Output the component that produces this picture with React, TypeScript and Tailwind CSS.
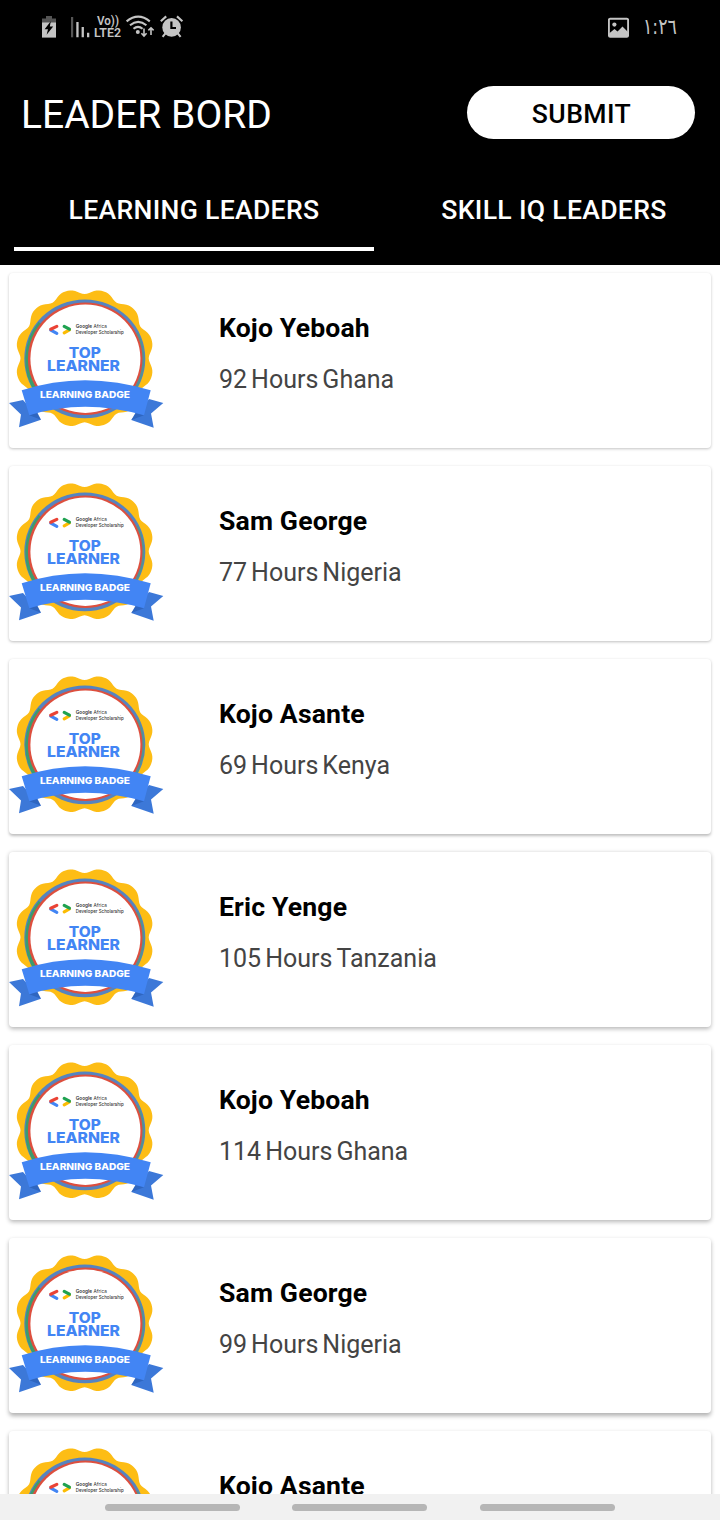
const people = [
  { name: 'Kojo Yeboah', detail: ['92', 'Hours', 'Ghana'] },
  { name: 'Sam George', detail: ['77', 'Hours', 'Nigeria'] },
  { name: 'Kojo Asante', detail: ['69', 'Hours', 'Kenya'] },
  { name: 'Eric Yenge', detail: ['105', 'Hours', 'Tanzania'] },
  { name: 'Kojo Yeboah', detail: ['114', 'Hours', 'Ghana'] },
  { name: 'Sam George', detail: ['99', 'Hours', 'Nigeria'] },
  { name: 'Kojo Asante', detail: ['69', 'Hours', 'Kenya'] },
];

// Shadows deepen slightly the lower a card sits on the screen.
const shadows = [
  'shadow-[0_1px_3px_rgba(0,0,0,0.24)]',
  'shadow-[0_1px_3px_rgba(0,0,0,0.26)]',
  'shadow-[0_1.5px_3px_rgba(0,0,0,0.26)]',
  'shadow-[0_1.5px_4px_rgba(0,0,0,0.28)]',
  'shadow-[0_2px_4px_rgba(0,0,0,0.28)]',
  'shadow-[0_2.5px_4px_rgba(0,0,0,0.3)]',
  'shadow-[0_2.5px_4px_rgba(0,0,0,0.3)]',
];

const scallop = (() => {
  const points: string[] = [];
  for (let i = 0; i < 360; i += 2) {
    const a = (i * Math.PI) / 180;
    const r = 67.2 - 2.7 * Math.cos(12 * a) - 0.4 * Math.cos(24 * a);
    points.push(`${(75.6 + r * Math.sin(a)).toFixed(2)},${(85.2 - r * Math.cos(a)).toFixed(2)}`);
  }
  return points.join(' ');
})();

function Badge() {
  return (
    <svg width="156" height="175" viewBox="0 0 156 175" className="shrink-0 font-['Inter',sans-serif]">
      <polygon points={scallop} fill="#fdbd15" />
      <ellipse cx="75.8" cy="85.8" rx="60.5" ry="59.4" fill="#5584c0" />
      <path d="M31 50A57.5 57.5 0 0 0 28 119" fill="none" stroke="#3c9c6c" strokeWidth="3.4" />
      <path d="M128 60A58.6 58.6 0 0 1 125 118" fill="none" stroke="#53938f" strokeWidth="2" />
      <ellipse cx="76.2" cy="85.8" rx="57.3" ry="56.3" fill="#dd4f3e" />
      <ellipse cx="76.4" cy="85.8" rx="55" ry="54.2" fill="#fff" />
      <g fill="none" strokeWidth="3.2" strokeLinecap="round">
        <path d="M41.8 57.2L47.8 60.3" stroke="#4285f4" />
        <path d="M41.8 56.2L47.8 53.4" stroke="#ea4335" />
        <path d="M55.2 59.8L60.4 56.8" stroke="#fbbc04" />
        <path d="M55.2 53.4L60.4 56.2" stroke="#1fa251" />
      </g>
      <g fill="#333">
        <text x="66.8" y="55.2" fontSize="5" textLength="31" lengthAdjust="spacingAndGlyphs">
          <tspan fontWeight="600">Google</tspan> Africa
        </text>
        <text x="66.8" y="61" fontSize="5" fontWeight="500" textLength="48" lengthAdjust="spacingAndGlyphs">
          Developer Scholarship
        </text>
      </g>
      <g fontWeight="800" fill="#4285f4" fontSize="14.2">
        <text x="59.8" y="85.4" textLength="32" lengthAdjust="spacingAndGlyphs">TOP</text>
        <text x="38" y="98.4" textLength="73" lengthAdjust="spacingAndGlyphs">LEARNER</text>
      </g>
      <path d="M0 130L14 127L32 146.7L10 154.3L12 141.5Z" fill="#3c78d8" />
      <path d="M154.3 130L140 126L122.3 147L144.7 154.8L142 140.5Z" fill="#3c78d8" />
      <path d="M20.3 142.3L28 139L32 146.7ZM135 142.3L127 139L122.3 147Z" fill="#2f66c0" />
      <path d="M12.7 117.3Q75 97 141.7 117.3L135 142.3Q75 125 20.3 142.3Z" fill="#4285f4" />
      <text x="31" y="125.4" fontSize="9.3" fontWeight="800" fill="#fff" textLength="90" lengthAdjust="spacingAndGlyphs">
        LEARNING BADGE
      </text>
    </svg>
  );
}

function StatusBar() {
  return (
    <div className="flex h-[54px] shrink-0 items-start justify-between pr-[42px] pl-10 text-[#c4c4c4]">
      <svg width="146" height="54" viewBox="40 0 146 54" fill="currentColor" className="font-['Roboto',sans-serif]">
        <path d="M46 16h6v2.6h4V23H42v-4.4h4z" fill="#555" />
        <path d="M42 22.5h14V37.6H42z" />
        <path d="M50.8 21.2L44.6 29.2H48L46.6 34.8L53.2 26.6H49.8Z" fill="#000" />
        <path d="M71 17h2.2v20.3H71z" fill="#555" />
        <path d="M76.3 22h2.3v15.3h-2.3zM81.6 27h2.3v10.3h-2.3zM87 32.8h2.3v4.5H87z" />
        <text x="97" y="25" fontSize="12" fontWeight="600" textLength="22" lengthAdjust="spacingAndGlyphs">Vo))</text>
        <text x="94" y="37" fontSize="12.8" fontWeight="600" textLength="27" lengthAdjust="spacingAndGlyphs">LTE2</text>
        <g fill="none" stroke="currentColor" strokeWidth="2.1">
          <path d="M126.6 21.4Q138.2 11.9 149.8 21.4" />
          <path d="M130 25.2Q138.2 18.4 146.4 25.2" />
          <path d="M133.5 28.8Q138 25 142.6 28.8" />
          <path d="M144 28.4V36M141.4 33.2L144 36L146.6 33.2M151 35V27.8M148.4 30.4L151 27.8L153.6 30.4" strokeWidth="1.6" />
        </g>
        <circle cx="137.8" cy="32" r="2" />
        <circle cx="171.6" cy="27.4" r="9.3" />
        <g fill="none" stroke="currentColor" strokeWidth="2.1">
          <path d="M160.8 21.2L166.2 16.4M182.4 21.2L177 16.4M165.6 33.2L162.6 36.8M177.6 33.2L180.6 36.8" />
        </g>
        <path d="M171.4 21.5V28H176" fill="none" stroke="#000" strokeWidth="2.2" />
      </svg>
      <div className="flex gap-3.5">
        <svg width="21" height="54" viewBox="608 0 21 54">
          <rect x="608.9" y="18.7" width="19.2" height="18" rx="1.2" fill="none" stroke="currentColor" strokeWidth="1.9" />
          <circle cx="614.4" cy="24.6" r="2.1" fill="currentColor" />
          <path d="M609 33.5L614.5 29L617.5 31.5L622.5 26.5L628 32V37H609Z" fill="currentColor" />
        </svg>
        <div className="w-[35px]">
          <span
            dir="ltr"
            className="mt-[11px] block w-max origin-left scale-x-[0.79] text-[22px] leading-8 tracking-[-2px] whitespace-nowrap font-['DejaVu_Sans',sans-serif] [unicode-bidi:bidi-override]"
          >
            ١:٢٦
          </span>
        </div>
      </div>
    </div>
  );
}

export default function App() {
  return (
    <div className="flex h-[1520px] w-[720px] flex-col overflow-hidden bg-white font-['Roboto',sans-serif]">
      <header className="flex h-[265px] shrink-0 flex-col bg-black text-white">
        <StatusBar />
        <div className="flex h-[116px] items-center justify-between pr-[25px] pl-[21px]">
          <h1 className="pt-1.5 text-[39px] leading-[46px]">LEADER BORD</h1>
          <button className="h-[53px] w-[228px] rounded-full bg-white pt-[3px] pl-px text-[26.6px] leading-9 font-medium tracking-[0.4px] text-black">
            SUBMIT
          </button>
        </div>
        <div className="flex h-[81px] pl-[14px] text-[26.6px] leading-9 font-medium tracking-[0.3px]">
          <div className="flex w-[360px] shrink-0 items-center justify-center border-b-4 pt-0.5">LEARNING LEADERS</div>
          <div className="flex w-[360px] shrink-0 items-center justify-center pb-0.5">SKILL IQ LEADERS</div>
        </div>
      </header>
      <main className="flex h-[1229px] shrink-0 flex-col gap-[18px] overflow-hidden px-[9px] pt-2">
        {people.map((p, i) => (
          <section key={i} className={`flex h-[175px] shrink-0 rounded bg-white ${shadows[i]}`}>
            <Badge />
            <div className="pt-[37px] pl-[54px]">
              <h2 className="text-[26.6px] leading-9 font-bold tracking-[0.15px] text-black">{p.name}</h2>
              <p className="mt-4 flex gap-1 text-[25px] leading-9 text-[#444]">
                {p.detail.map((d) => <span key={d}>{d}</span>)}
              </p>
            </div>
          </section>
        ))}
      </main>
      <nav className="flex h-[26px] shrink-0 items-center gap-[52px] bg-[#f1f1f1] pt-px pl-[105px]">
        <div className="h-[7px] w-[135px] rounded-full bg-[#b6b6b6]" />
        <div className="h-[7px] w-[135px] rounded-full bg-[#b6b6b6]" />
        <div className="ml-px h-[7px] w-[135px] rounded-full bg-[#b6b6b6]" />
      </nav>
    </div>
  );
}
